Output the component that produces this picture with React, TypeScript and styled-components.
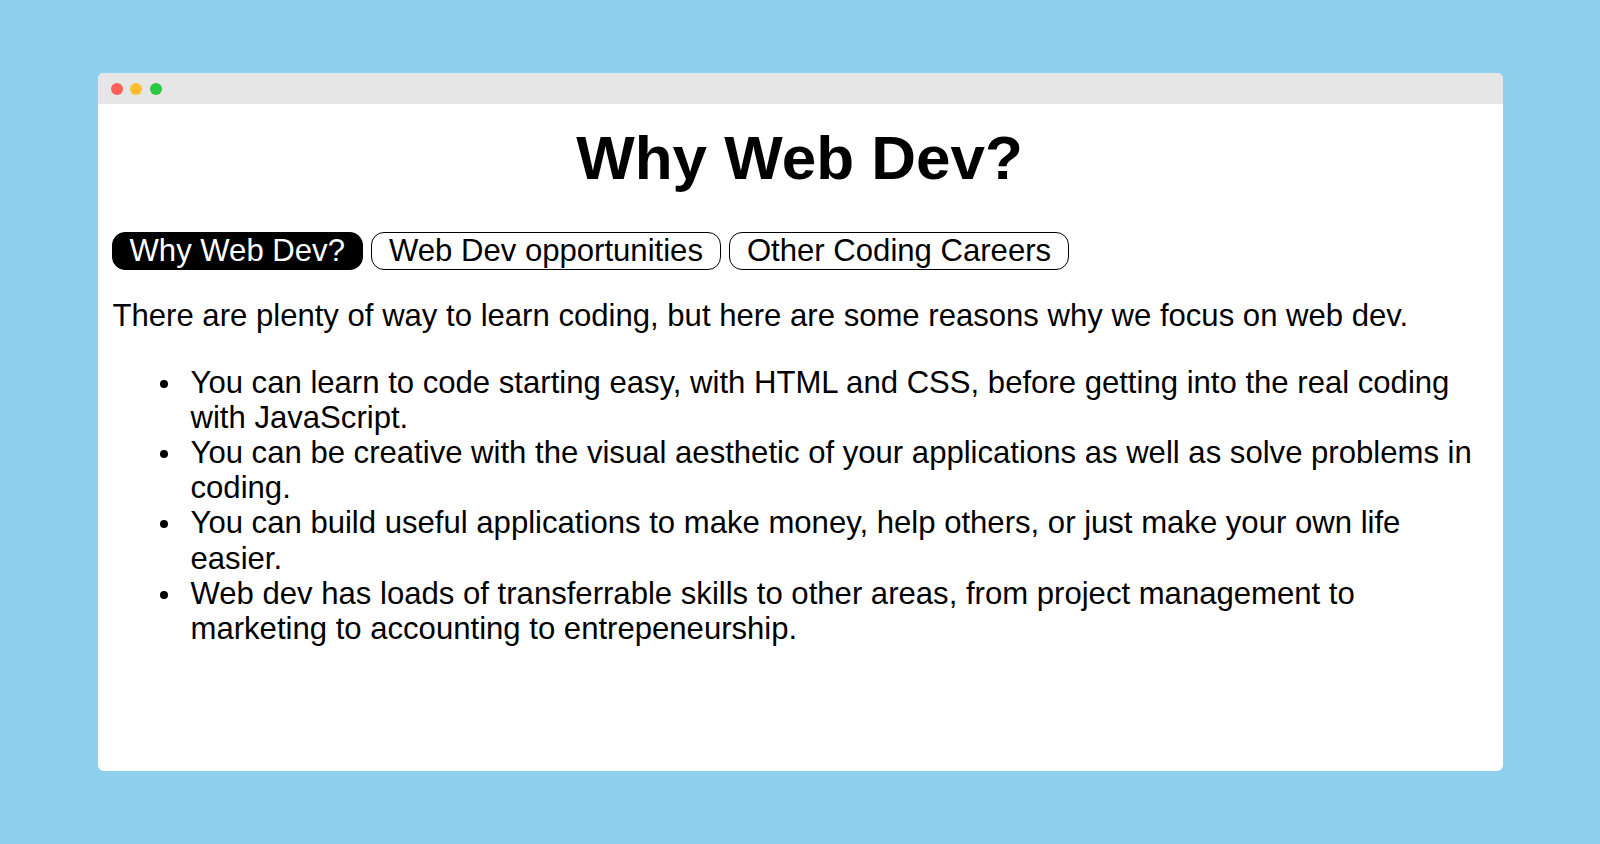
import React, { useState } from "react";
import styled, { createGlobalStyle } from "styled-components";

const GlobalStyle = createGlobalStyle`
  html, body {
    margin: 0;
    padding: 0;
  }
  body {
    background: #8fd0ee;
    font-family: "Liberation Sans", Arial, Helvetica, sans-serif;
  }
`;

const Page = styled.div`
  width: 1600px;
  height: 844px;
  display: flex;
  align-items: center;
  justify-content: center;
  background: #8fd0ee;
`;

const Window = styled.div`
  width: 1405px;
  height: 698px;
  background: #ffffff;
  border-radius: 6px;
  overflow: hidden;
  display: flex;
  flex-direction: column;
`;

const TitleBar = styled.div`
  height: 31px;
  flex: 0 0 31px;
  background: #e6e6e6;
  display: flex;
  align-items: center;
  gap: 7.5px;
  padding-left: 13px;
`;

const Dot = styled.span<{ $color: string }>`
  width: 12px;
  height: 12px;
  border-radius: 50%;
  background: ${(p) => p.$color};
`;

const Content = styled.div`
  padding: 0 15px 0 14px;
  color: #000;
  font-size: 31.1px;
  line-height: 35.1px;
`;

const Title = styled.h1`
  margin: 18px 0 39px;
  font-size: 62px;
  line-height: 71px;
  font-weight: 700;
  text-align: center;
`;

const TabRow = styled.div`
  display: flex;
  gap: 8px;
`;

const Tab = styled.button<{ $active: boolean }>`
  font-family: inherit;
  font-size: 31.1px;
  line-height: 36px;
  padding: 0 17px;
  border: 1px solid #000;
  border-radius: 13px;
  background: ${(p) => (p.$active ? "#000" : "#fff")};
  color: ${(p) => (p.$active ? "#fff" : "#000")};
  cursor: pointer;
`;

const Paragraph = styled.p`
  margin: 28px 0 0 1px;
`;

const List = styled.ul`
  margin: 32px 0 0;
  padding: 0;
  list-style: none;
`;

const Item = styled.li`
  display: grid;
  grid-template-columns: 79px 1fr;
  margin: 0;
`;

const Bullet = styled.span`
  width: 8px;
  height: 8px;
  margin: 15px 0 0 48px;
  border-radius: 50%;
  background: #000;
`;

const tabs = ["Why Web Dev?", "Web Dev opportunities", "Other Coding Careers"];

const reasons = [
  "You can learn to code starting easy, with HTML and CSS, before getting into the real coding with JavaScript.",
  "You can be creative with the visual aesthetic of your applications as well as solve problems in coding.",
  "You can build useful applications to make money, help others, or just make your own life easier.",
  "Web dev has loads of transferrable skills to other areas, from project management to marketing to accounting to entrepeneurship.",
];

export default function App() {
  const [active, setActive] = useState(0);
  return (
    <>
      <GlobalStyle />
      <Page>
        <Window>
          <TitleBar>
            <Dot $color="#fe5f57" />
            <Dot $color="#febc2e" />
            <Dot $color="#28c840" />
          </TitleBar>
          <Content>
            <Title>Why Web Dev?</Title>
            <TabRow>
              {tabs.map((t, i) => (
                <Tab key={t} $active={i === active} onClick={() => setActive(i)}>
                  {t}
                </Tab>
              ))}
            </TabRow>
            <Paragraph>
              There are plenty of way to learn coding, but here are some reasons why we focus on web dev.
            </Paragraph>
            <List>
              {reasons.map((r) => (
                <Item key={r}>
                  <Bullet />
                  <span>{r}</span>
                </Item>
              ))}
            </List>
          </Content>
        </Window>
      </Page>
    </>
  );
}
